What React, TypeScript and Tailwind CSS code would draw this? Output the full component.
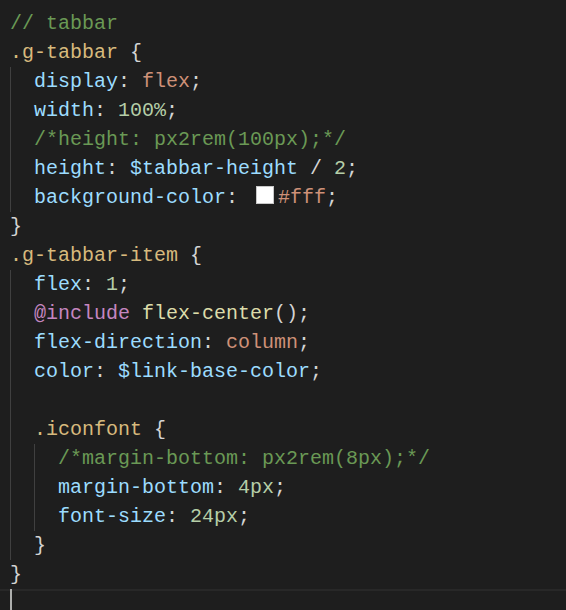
import React from 'react';

type Tok = [string, string];

const C = {
  comment: 'text-[#6a9955]',
  sel: 'text-[#d7ba7d]',
  prop: 'text-[#9cdcfe]',
  str: 'text-[#ce9178]',
  num: 'text-[#b5cea8]',
  punc: 'text-[#d4d4d4]',
  kw: 'text-[#c586c0]',
  fn: 'text-[#dcdcaa]',
};

// each line: guide count, leading spaces (after guides), tokens
type Line = { guides: number; pad?: string; toks: (Tok | 'swatch')[] };

const lines: Line[] = [
  { guides: 0, toks: [[C.comment, '// tabbar']] },
  { guides: 0, toks: [[C.sel, '.g-tabbar'], [C.punc, ' {']] },
  { guides: 1, toks: [[C.prop, 'display'], [C.punc, ': '], [C.str, 'flex'], [C.punc, ';']] },
  { guides: 1, toks: [[C.prop, 'width'], [C.punc, ': '], [C.num, '100%'], [C.punc, ';']] },
  { guides: 1, toks: [[C.comment, '/*height: px2rem(100px);*/']] },
  { guides: 1, toks: [[C.prop, 'height'], [C.punc, ': '], [C.prop, '$tabbar-height'], [C.punc, ' / '], [C.num, '2'], [C.punc, ';']] },
  { guides: 1, toks: [[C.prop, 'background-color'], [C.punc, ': '], 'swatch', [C.str, '#fff'], [C.punc, ';']] },
  { guides: 0, toks: [[C.punc, '}']] },
  { guides: 0, toks: [[C.sel, '.g-tabbar-item'], [C.punc, ' {']] },
  { guides: 1, toks: [[C.prop, 'flex'], [C.punc, ': '], [C.num, '1'], [C.punc, ';']] },
  { guides: 1, toks: [[C.kw, '@include'], [C.punc, ' '], [C.fn, 'flex-center'], [C.punc, '();']] },
  { guides: 1, toks: [[C.prop, 'flex-direction'], [C.punc, ': '], [C.str, 'column'], [C.punc, ';']] },
  { guides: 1, toks: [[C.prop, 'color'], [C.punc, ': '], [C.prop, '$link-base-color'], [C.punc, ';']] },
  { guides: 1, toks: [] },
  { guides: 1, toks: [[C.sel, '.iconfont'], [C.punc, ' {']] },
  { guides: 2, toks: [[C.comment, '/*margin-bottom: px2rem(8px);*/']] },
  { guides: 2, toks: [[C.prop, 'margin-bottom'], [C.punc, ': '], [C.num, '4px'], [C.punc, ';']] },
  { guides: 2, toks: [[C.prop, 'font-size'], [C.punc, ': '], [C.num, '24px'], [C.punc, ';']] },
  { guides: 1, toks: [[C.punc, '}']] },
  { guides: 0, toks: [[C.punc, '}']] },
];

function CodeLine({ line }: { line: Line }) {
  return (
    <div className="h-[29px] leading-[29px] whitespace-pre flex">
      {Array.from({ length: line.guides }).map((_, i) => (
        <span key={i} className="inline-block w-[24px] h-[29px] shrink-0 border-l border-[#404040]" />
      ))}
      <span>
        {line.toks.map((t, i) =>
          t === 'swatch' ? (
            <span
              key={i}
              className="inline-block align-top mt-[3px] ml-[6px] mr-[4px] w-[18px] h-[18px] bg-white border border-[#c8c8c8]"
            />
          ) : (
            <span key={i} className={t[0]}>
              {t[1]}
            </span>
          )
        )}
      </span>
    </div>
  );
}

export default function App() {
  return (
    <div
      className="w-[566px] h-[610px] overflow-hidden bg-[#1e1e1e] text-[20px] text-[#d4d4d4] flex flex-col"
      style={{ fontFamily: '"Liberation Mono", "DejaVu Sans Mono", monospace' }}
    >
      <div className="pt-[9px] pl-[10px]">
        {lines.map((l, i) => (
          <CodeLine key={i} line={l} />
        ))}
      </div>
      {/* current line */}
      <div className="flex-1 border-t-2 border-[#282828] pl-[10px]">
        <div className="w-[2px] h-[31px] -mt-[2px] bg-[#aeafad]" />
      </div>
    </div>
  );
}
